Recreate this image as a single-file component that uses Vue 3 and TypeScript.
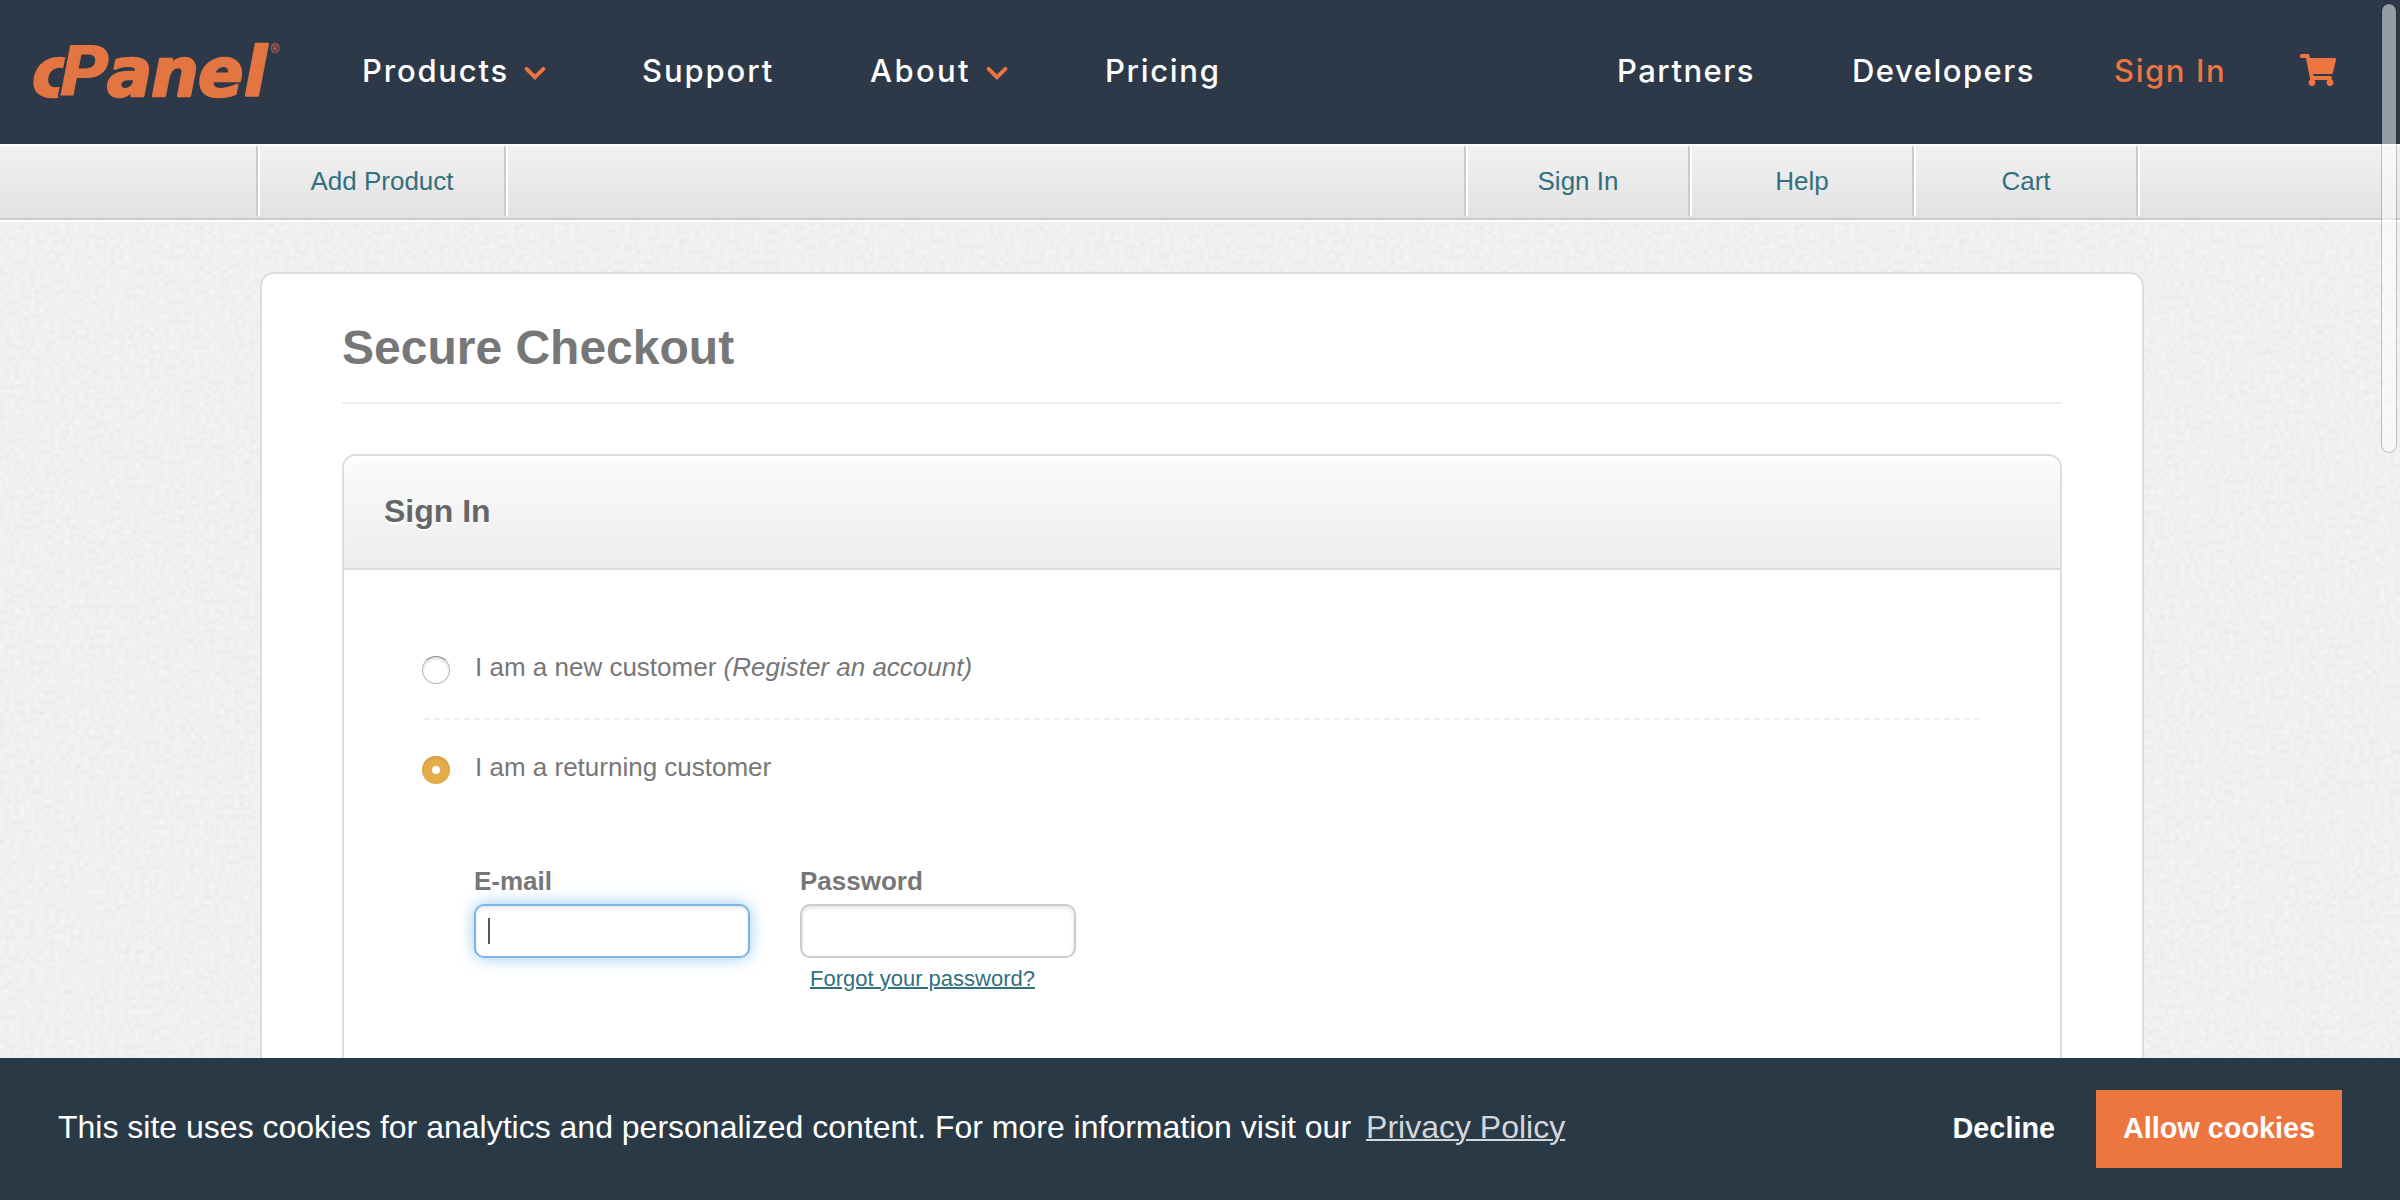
<script setup lang="ts">
interface NavItem {
  label: string
  chevron?: boolean
  active?: boolean
  left: number
  tracking: number
}

const mainNav: NavItem[] = [
  { label: 'Products', chevron: true, left: 362, tracking: 1.8 },
  { label: 'Support', left: 642, tracking: 1.9 },
  { label: 'About', chevron: true, left: 870, tracking: 2.4 },
  { label: 'Pricing', left: 1105, tracking: 1.7 },
  { label: 'Partners', left: 1617, tracking: 1.5 },
  { label: 'Developers', left: 1852, tracking: 1.5 },
  { label: 'Sign In', active: true, left: 2114, tracking: 1.6 },
]
const cartLeft = 2300
function slotWidth(i: number): string {
  const end = i + 1 < mainNav.length ? mainNav[i + 1].left : cartLeft
  return end - mainNav[i].left + 'px'
}
const accountLinks: string[] = ['Sign In', 'Help', 'Cart']
</script>

<template>
  <div class="page">
    <svg class="texture" width="2400" height="1200" aria-hidden="true">
      <filter id="paper" x="0" y="0" width="100%" height="100%" color-interpolation-filters="sRGB">
        <feTurbulence type="fractalNoise" baseFrequency="0.2" numOctaves="1" seed="4" />
        <feColorMatrix values="0.065 0 0 0 0.908  0.065 0 0 0 0.908  0.065 0 0 0 0.908  0 0 0 0 1" />
      </filter>
      <rect width="2400" height="1200" filter="url(#paper)" />
    </svg>

    <header class="topbar">
      <svg class="logo" width="256" height="64" viewBox="0 0 256 64" role="img" aria-label="cPanel">
        <text class="wordmark" y="57.5"><tspan x="-2">c</tspan><tspan class="cap" x="25">P</tspan><tspan x="73 117 164 210">anel</tspan></text>
        <text class="reg" x="236.5" y="15">®</text>
      </svg>
      <nav class="nav">
        <a
          v-for="(item, i) in mainNav"
          :key="item.label"
          class="nav-item"
          :class="{ active: item.active }"
          :style="{ width: slotWidth(i), letterSpacing: item.tracking + 'px' }"
        >
          <span>{{ item.label }}</span>
          <svg v-if="item.chevron" class="chevron" width="22" height="14" viewBox="0 0 22 14">
            <path d="M2.6 2.8 11 11.2 19.4 2.8" />
          </svg>
        </a>
      </nav>
      <svg class="cart" width="36" height="32" viewBox="0 0 576 512">
        <path d="M528.12 301.319l47.273-208C578.806 78.301 567.391 64 551.99 64H159.208l-9.166-44.81C147.758 8.021 137.93 0 126.529 0H24C10.745 0 0 10.745 0 24v16c0 13.255 10.745 24 24 24h69.883l70.248 343.435C147.325 417.1 136 435.222 136 456c0 30.928 25.072 56 56 56s56-25.072 56-56c0-15.674-6.447-29.835-16.824-40h209.647C430.447 426.165 424 440.326 424 456c0 30.928 25.072 56 56 56s56-25.072 56-56c0-22.172-12.888-41.332-31.579-50.405l5.517-24.276c3.413-15.018-8.002-29.319-23.403-29.319H218.117l-6.545-32h293.145c11.206 0 20.92-7.754 23.403-18.681z" />
      </svg>
    </header>

    <div class="subnav">
      <a class="tab add">Add Product</a>
      <div class="account">
        <a v-for="link in accountLinks" :key="link" class="tab">{{ link }}</a>
      </div>
    </div>

    <main class="card">
      <h1>Secure Checkout</h1>
      <section class="panel">
        <h2>Sign In</h2>
        <div class="body">
          <label class="choice first">
            <i class="radio"></i>
            <span>I am a new customer <em>(Register an account)</em></span>
          </label>
          <div class="dashes"></div>
          <label class="choice second">
            <i class="radio on"></i>
            <span>I am a returning customer</span>
          </label>
          <div class="fields">
            <div class="field">
              <b>E-mail</b>
              <div class="input focused"><i class="caret"></i></div>
            </div>
            <div class="field">
              <b>Password</b>
              <div class="input"></div>
              <a class="forgot">Forgot your password?</a>
            </div>
          </div>
        </div>
      </section>
    </main>

    <div class="cookies">
      <p>This site uses cookies for analytics and personalized content. For more information visit our</p>
      <a class="policy">Privacy Policy</a>
      <a class="decline">Decline</a>
      <a class="allow">Allow cookies</a>
    </div>
    <div class="thumb"></div>
  </div>
</template>

<style>
html,
body {
  overflow: hidden;
}
</style>

<style scoped>
.page {
  position: relative;
  width: 2400px;
  height: 1200px;
  overflow: hidden;
  box-sizing: border-box;
  font: 26px/30px 'Liberation Sans', Arial, sans-serif;
  color: #777;
  background: #f0f0f0;
  isolation: isolate;
}
.page * {
  box-sizing: border-box;
}
.texture {
  position: absolute;
  inset: 0;
  z-index: -1;
}
.topbar {
  height: 144px;
  display: flex;
  background: #2d3949;
}
.logo {
  margin: 38px 0 0 34px;
  flex: none;
  overflow: visible;
}
.wordmark {
  font: italic bold 67px 'DejaVu Sans', sans-serif;
  fill: #e27541;
  stroke: #e27541;
  stroke-width: 2.4px;
  stroke-linejoin: round;
}
.cap {
  font-size: 69px;
  stroke: #2d3949;
  stroke-width: 5px;
  paint-order: stroke;
}
.reg {
  font: 12px 'Liberation Sans', sans-serif;
  fill: #e27541;
}
.nav {
  display: flex;
  margin-left: 72px;
}
.nav-item {
  flex: none;
  display: flex;
  height: 144px;
  align-items: center;
  padding-bottom: 2px;
  font: 500 31px/36px Inter, sans-serif;
  color: #fff;
  white-space: nowrap;
}
.nav-item.active {
  color: #ed7640;
}
.chevron {
  margin: 4px 0 0 15px;
  fill: none;
  stroke: #ed7640;
  stroke-width: 3.8;
  stroke-linecap: round;
}
.cart {
  margin-top: 54px;
  fill: #ed7640;
}
.subnav {
  height: 78px;
  display: flex;
  justify-content: space-between;
  padding: 0 260px 0 256px;
  border-top: 2px solid #fff;
  border-bottom: 2px solid #fff;
  background: linear-gradient(#ccc, #ccc) 0 100% / 100% 2px no-repeat, linear-gradient(#f1f1f1, #e2e2e2);
}
.account {
  display: flex;
}
.tab {
  width: 224px;
  height: 70px;
  padding-left: 2px;
  border-left: 2px solid #ccc;
  box-shadow: inset 2px 0 #fff;
  line-height: 70px;
  text-align: center;
  color: #32707f;
}
.tab.add {
  width: 250px;
  border-right: 2px solid #ccc;
  position: relative;
}
.tab.add::after {
  content: '';
  position: absolute;
  top: 0;
  right: -4px;
  width: 2px;
  height: 70px;
  background: #fff;
}
.account .tab:last-child {
  width: 228px;
  padding: 0;
  border-right: 2px solid #fff;
  box-shadow: inset 2px 0 #fff, inset -2px 0 #ccc;
}
.card {
  width: 1884px;
  height: 1000px;
  margin: 50px 0 0 260px;
  padding: 0 80px;
  border: 2px solid #ddd;
  border-radius: 14px;
  background: #fff;
}
h1 {
  height: 130px;
  margin: 0 0 50px;
  border-bottom: 2px solid #eee;
  font-size: 48px;
  line-height: 148px;
  color: #777;
}
.panel {
  height: 900px;
  border: 2px solid #ddd;
  border-radius: 14px;
}
h2 {
  height: 114px;
  margin: 0;
  padding-left: 40px;
  border-bottom: 2px solid #ddd;
  border-radius: 12px 12px 0 0;
  background: linear-gradient(#fbfbfb, #ededed);
  box-shadow: inset 0 8px 8px -4px #fff;
  font-size: 32px;
  line-height: 110px;
  color: #666;
  text-shadow: 0 2px #fff;
}
.body {
  padding: 84px 78px 0;
}
.choice {
  display: flex;
  height: 32px;
  line-height: 26px;
}
.radio {
  width: 28px;
  height: 28px;
  margin: 2px 25px 0 0;
  border: 1px solid #b4b4b4;
  border-top-color: #888;
  border-radius: 50%;
  background: #fff;
  box-shadow: inset 0 2px 3px #ddd;
}
.radio.on {
  border: 0;
  background: radial-gradient(circle at 50% 50%, #fff 3.6px, #e5ad4a 4.6px);
  box-shadow: inset 0 2px 3px #d39f45;
}
.dashes {
  height: 2px;
  margin: 32px 0 34px 2px;
  background: repeating-linear-gradient(90deg, #eee 0 6px, transparent 6px 10px);
}
.fields {
  display: flex;
  gap: 50px;
  margin: 80px 0 0 52px;
}
.field {
  width: 276px;
}
.field b {
  display: block;
  height: 38px;
}
.input {
  height: 54px;
  padding: 12px;
  border: 2px solid #ccc;
  border-radius: 10px;
  background: #fff;
  box-shadow: inset 0 2px 4px #e2e2e2;
}
.input.focused {
  border-color: #80b5ec;
  box-shadow: inset 0 2px 3px #e8e8e8, 0 0 16px rgba(82, 168, 236, 0.6);
}
.caret {
  display: block;
  width: 2px;
  height: 26px;
  background: #555;
}
.forgot {
  display: block;
  margin: 6px 0 0 10px;
  font-size: 22px;
  color: #32707f;
  text-decoration: underline;
  text-decoration-thickness: 2px;
}
.cookies {
  position: absolute;
  inset: 1058px 0 0;
  display: flex;
  align-items: center;
  padding: 0 58px;
  background: #2a3946;
  border-bottom: 1px solid #2d3949;
  font-size: 32px;
  line-height: 36px;
  color: #fff;
  white-space: nowrap;
}
.cookies p {
  margin: -4px 0 0;
}
.policy {
  margin: -4px 0 0 15px;
  color: #d4d7da;
  text-decoration: underline;
  text-decoration-thickness: 2px;
}
.decline {
  margin: -2px 41px 0 auto;
  font-weight: bold;
  font-size: 28.8px;
}
.allow {
  width: 246px;
  height: 78px;
  line-height: 76px;
  text-align: center;
  background: #ed7640;
  font-weight: bold;
  font-size: 28.8px;
}
.thumb {
  position: absolute;
  left: 2381px;
  top: 3px;
  width: 16px;
  height: 450px;
  border: 1px solid rgba(0, 0, 0, 0.2);
  border-radius: 8px;
  background: rgba(255, 255, 255, 0.5);
  background-clip: padding-box;
}
</style>
